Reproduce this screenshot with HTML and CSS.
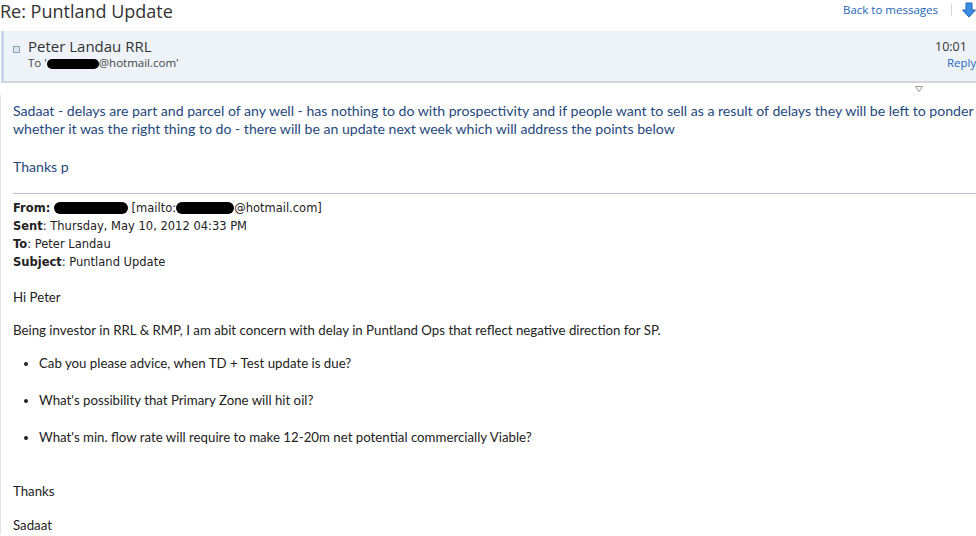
FILE: index.html
```html
<!DOCTYPE html>
<html lang="en">
<head>
    <meta charset="UTF-8">
    <title>Re: Puntland Update</title>
    <link rel="stylesheet" href="styles.css">
</head>
<body>

<div class="page">
  <div class="topbar">
    <h1 class="subject">Re: Puntland Update</h1>
    <div class="actions">
      <a href="#" class="back">Back to messages</a>
      <span class="sep"></span>
      <svg class="dl" width="14" height="16" viewBox="0 0 14 16">
        <path d="M4 1h6v7h3.5L7 15 0.5 8H4z" fill="#3a8ee6" stroke="#1f64b8" stroke-width="1"/>
      </svg>
    </div>
  </div>

  <div class="msg-head">
    <span class="chk"></span>
    <div class="who">
      <div class="name">Peter Landau RRL</div>
      <div class="to">To '<span class="redact r1"></span>@hotmail.com'</div>
    </div>
    <div class="meta">
      <div class="time">10:01</div>
      <a href="#" class="reply">Reply</a>
    </div>
  </div>

  <div class="caret-row">
    <svg width="8" height="6" viewBox="0 0 8 6"><path d="M0.5 0.5h7L4 5.5z" fill="#fff" stroke="#9a9a9a" stroke-width="1"/></svg>
  </div>

  <div class="mail">
    <div class="reply-text">
      <p>Sadaat - delays are part and parcel of any well - has nothing to do with prospectivity and if people want to sell as a result of delays they will be left to ponder whether it was the right thing to do - there will be an update next week which will address the points below</p>
      <p class="sign">Thanks p</p>
    </div>

    <div class="quote-head">
      <div><b>From:</b> <span class="redact r2"></span> [mailto:<span class="redact r3"></span>@hotmail.com]</div>
      <div><b>Sent</b>: Thursday, May 10, 2012 04:33 PM</div>
      <div><b>To</b>: Peter Landau</div>
      <div><b>Subject</b>: Puntland Update</div>
    </div>

    <div class="orig">
      <p>Hi Peter</p>
      <p>Being investor in RRL &amp; RMP, I am abit concern with delay in Puntland Ops that reflect negative direction for SP.</p>
      <ul>
        <li>Cab you please advice, when TD + Test update is due?</li>
        <li>What's possibility that Primary Zone will hit oil?</li>
        <li>What's min. flow rate will require to make 12-20m net potential commercially Viable?</li>
      </ul>
      <p class="thanks">Thanks</p>
      <p>Sadaat</p>
    </div>
  </div>
</div>

</body>
</html>
```

FILE: styles.css
```css
body {
    margin: 0;
    background: #fff;
    overflow: hidden;
}

.page {
    width: 1000px;
}

.topbar {
    display: flex;
    align-items: flex-start;
    height: 31px;
}

.subject {
    margin: 0;
    padding-top: 1px;
    font-family: "Open Sans", sans-serif;
    font-weight: normal;
    font-size: 18px;
    line-height: 20px;
    color: #333;
}

.actions {
    margin-left: auto;
    display: flex;
    align-items: center;
    padding-top: 2px;
    margin-right: 24px;
}

.back {
    font-family: "Open Sans", sans-serif;
    font-size: 11.5px;
    line-height: 16px;
    color: #1e68b8;
    text-decoration: none;
}

.sep {
    width: 1px;
    height: 12px;
    background: #d6d6d6;
    margin: 0 10px 0 13px;
}

.msg-head {
    display: flex;
    height: 50px;
    margin-left: 1px;
    background: #eef3fa;
    border-left: 3px solid #c9d8ee;
    border-bottom: 2px solid #d2d5da;
    font-family: "Open Sans", sans-serif;
}

.chk {
    width: 5px;
    height: 5px;
    border: 1px solid #8f9db3;
    background: #dfe6f0;
    margin: 15px 0 0 9px;
}

.who {
    margin-left: 8px;
    padding-top: 6px;
}

.name {
    font-size: 15px;
    line-height: 19px;
    color: #333;
}

.to {
    font-size: 11.5px;
    line-height: 14px;
    color: #444;
}

.meta {
    margin-left: auto;
    padding-top: 8px;
    width: 52px;
    padding-right: 20px;
}

.time {
    font-size: 12.5px;
    line-height: 16px;
    color: #333;
    padding-left: 7px;
}

.reply {
    display: block;
    padding-left: 19px;
    color: #1e68b8;
    text-decoration: none;
    line-height: 16px;
    font-size: 11.5px;
}

.caret-row {
    height: 12px;
    padding-left: 915px;
    padding-top: 3px;
    box-sizing: border-box;
    line-height: 0;
}

.mail {
    border-left: 1px solid #e3e3e3;
    padding-left: 12px;
}

.reply-text {
    font-family: Lato, sans-serif;
    font-size: 14.1px;
    line-height: 18px;
    color: #1f497d;
    padding-top: 7px;
}

.reply-text p {
    margin: 0 0 20px;
}

.reply-text .sign {
    margin-bottom: 17px;
}

.quote-head {
    border-top: 1px solid #b5c4df;
    padding-top: 5px;
    font-family: "DejaVu Sans", sans-serif;
    font-size: 11.5px;
    line-height: 18px;
    color: #222;
}

.redact {
    display: inline-block;
    height: 12px;
    background: #000;
    border-radius: 6px;
    vertical-align: -2px;
}

.r1 { width: 52px; height: 10px; }
.r2 { width: 74px; }
.r3 { width: 58px; }

.orig {
    font-family: Lato, sans-serif;
    font-size: 13.25px;
    color: #222;
    padding-top: 17px;
}

.orig p {
    margin: 0 0 15px;
    line-height: 18px;
}

.orig ul {
    margin: 0;
    padding-left: 26px;
}

.orig li {
    line-height: 18px;
    margin-bottom: 19px;
}

.orig .thanks {
    margin-top: 36px;
    margin-bottom: 16px;
}
```
